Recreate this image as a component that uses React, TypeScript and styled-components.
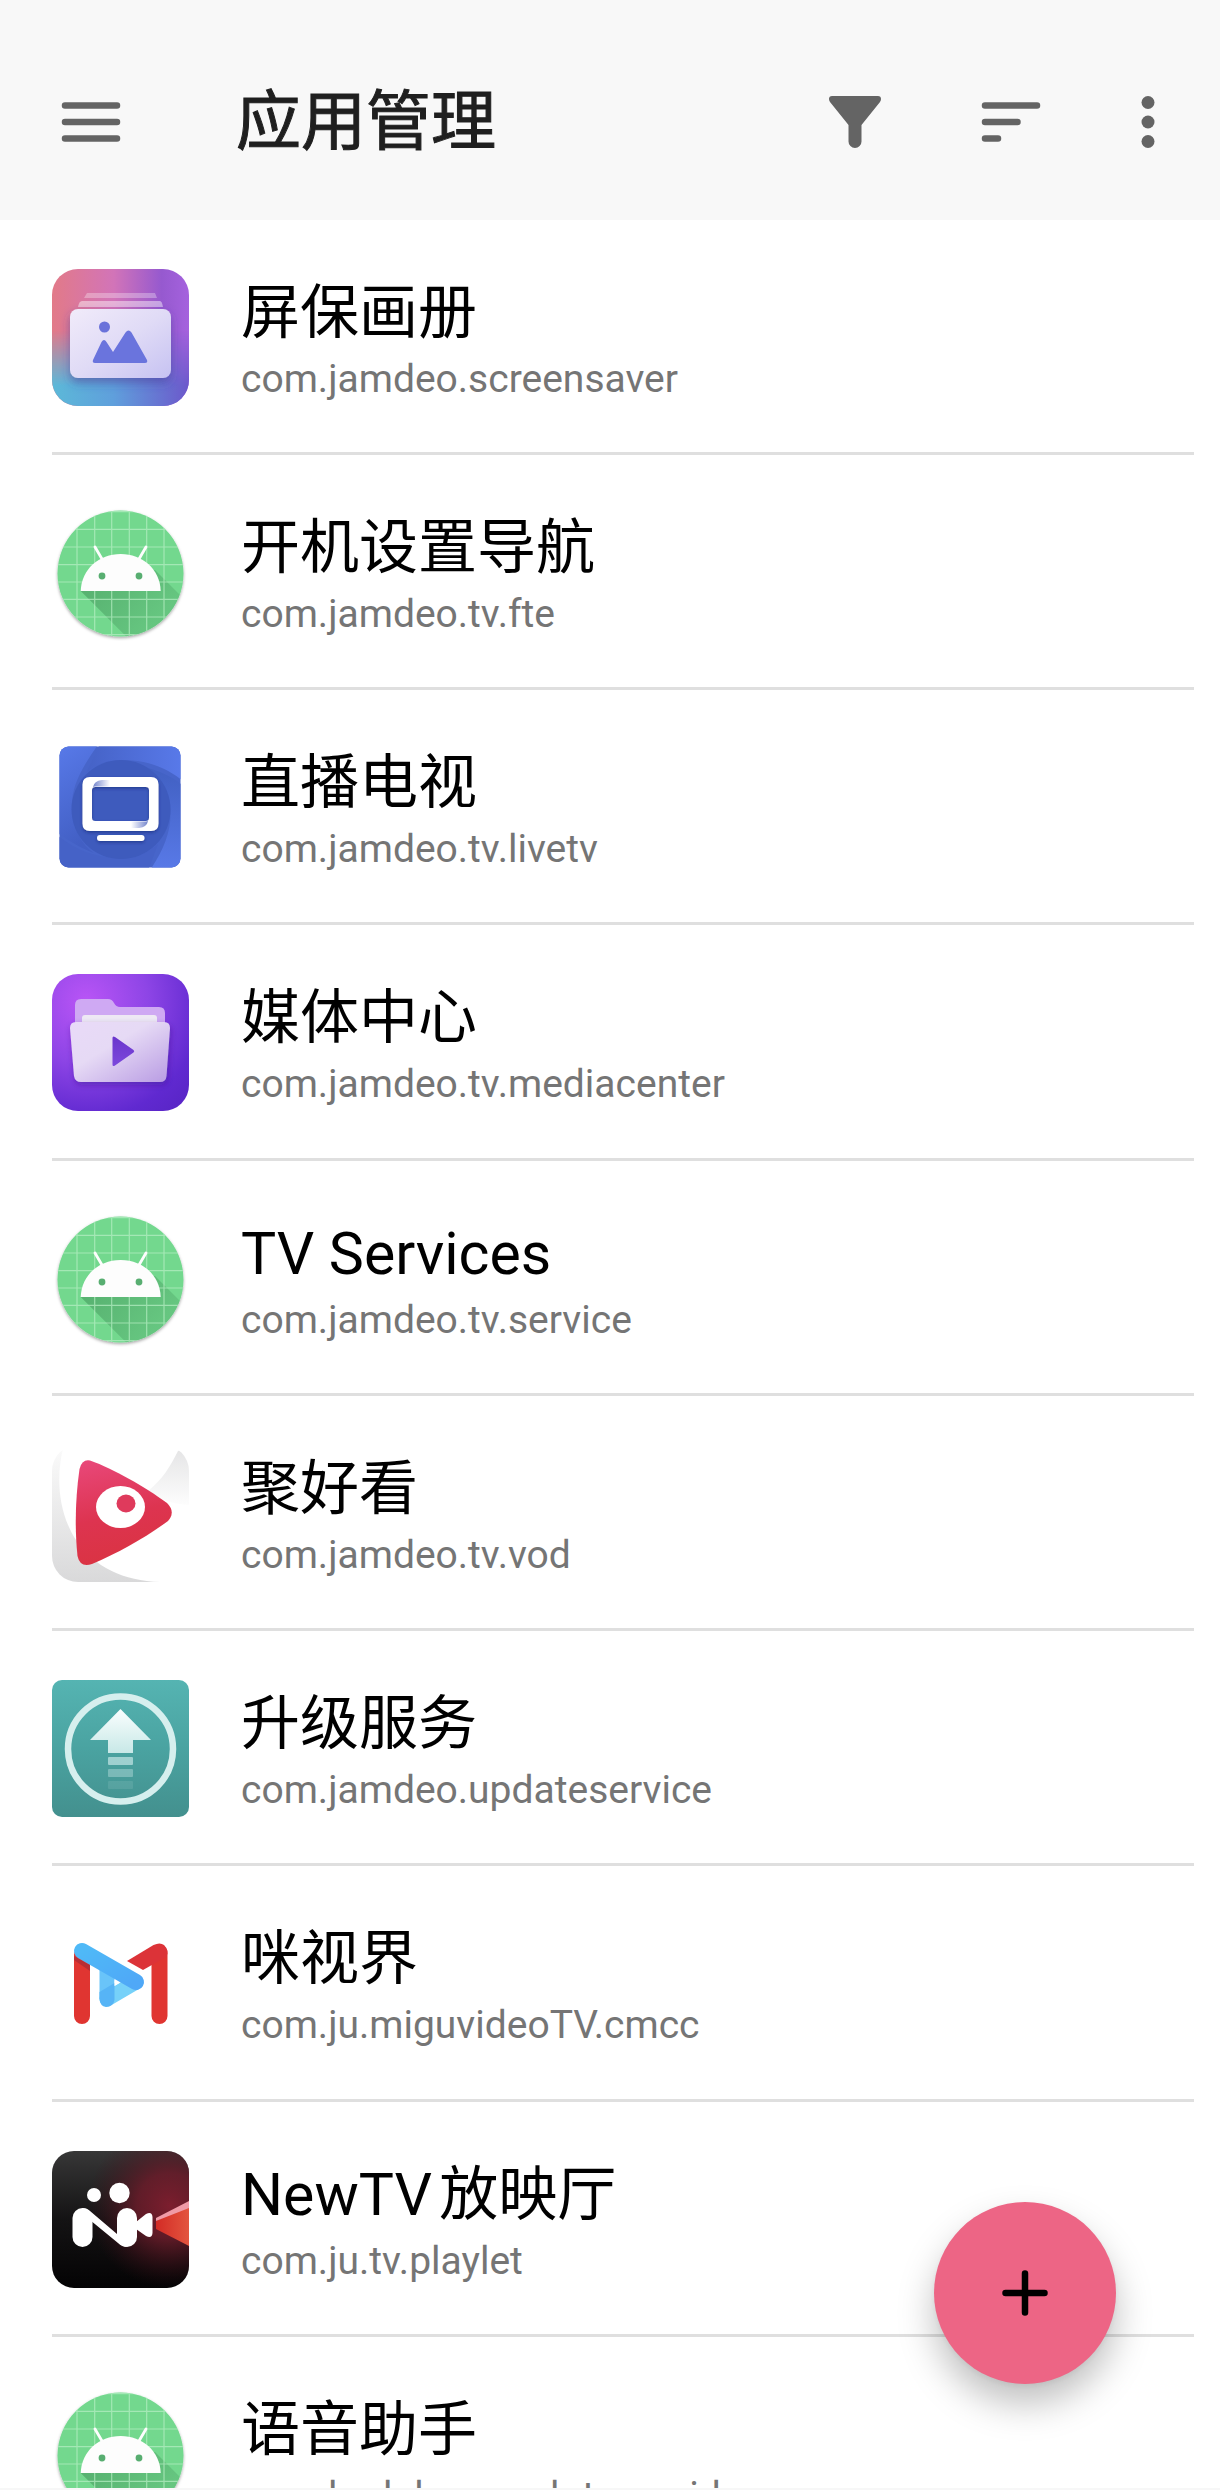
import type { ReactNode } from "react";
import styled, { createGlobalStyle } from "styled-components";

interface AppItem {
  name: string;
  packageName: string;
  icon: ReactNode;
}

const AlbumIcon = () => (
  <AppSvg>
    <defs>
      <linearGradient id="albumBase" x1="0" y1="0" x2="1" y2="0">
        <stop offset="0" stopColor="#e27a88" />
        <stop offset="0.45" stopColor="#d274b8" />
        <stop offset="0.8" stopColor="#9659cf" />
        <stop offset="1" stopColor="#a562de" />
      </linearGradient>
      <linearGradient id="albumCool" x1="0" y1="0" x2="1" y2="0">
        <stop offset="0" stopColor="#5cb9d8" />
        <stop offset="0.45" stopColor="#5f9fdc" />
        <stop offset="1" stopColor="#6c58cb" />
      </linearGradient>
      <linearGradient id="albumFade" x1="0" y1="0" x2="0" y2="1">
        <stop offset="0.45" stopColor="#fff" stopOpacity="0" />
        <stop offset="0.85" stopColor="#fff" />
      </linearGradient>
      <mask id="albumMask">
        <rect width="137" height="137" fill="url(#albumFade)" />
      </mask>
      <linearGradient id="albumCard" x1="0" y1="0" x2="1" y2="1">
        <stop offset="0" stopColor="#f1ebfa" />
        <stop offset="0.5" stopColor="#e0dbf6" />
        <stop offset="1" stopColor="#c6c2f2" />
      </linearGradient>
      <filter id="albumShadow" x="-20%" y="-20%" width="140%" height="150%">
        <feDropShadow dx="0" dy="5" stdDeviation="5" floodColor="#3c3c96" floodOpacity="0.5" />
      </filter>
    </defs>
    <rect width="137" height="137" rx="26" fill="url(#albumBase)" />
    <rect width="137" height="137" rx="26" fill="url(#albumCool)" mask="url(#albumMask)" />
    <path d="M35 24H103L105 29H32Z" fill="#fff" opacity="0.3" />
    <path d="M30 32H108Q110 32 111 38H26Q27 32 30 32Z" fill="#fff" opacity="0.45" />
    <rect x="18" y="40" width="101" height="69" rx="8" fill="url(#albumCard)" filter="url(#albumShadow)" />
    <circle cx="52.5" cy="58" r="5.5" fill="#6a72da" />
    <path
      d="M43 94Q40 94 41 91L49.500 73Q52 69 54.500 73L61 83L73.500 63.500Q76.500 59.500 79.500 63.500L95 91Q96 94 93 94Z"
      fill="#6a74dd"
    />
  </AppSvg>
);

const AndroidIcon = () => (
  <AppSvg>
    <defs>
      <clipPath id="androidClip">
        <circle cx="68.5" cy="69.5" r="63" />
      </clipPath>
      <linearGradient id="androidShade" x1="0" y1="0" x2="1" y2="0.600">
        <stop offset="0" stopColor="#2a7340" stopOpacity="0.42" />
        <stop offset="0.8" stopColor="#2a7340" stopOpacity="0.18" />
      </linearGradient>
      <filter id="androidShadow" x="-10%" y="-10%" width="120%" height="120%">
        <feDropShadow dx="0" dy="1.500" stdDeviation="1.500" floodColor="#000" floodOpacity="0.35" />
      </filter>
    </defs>
    <circle cx="68.5" cy="69.5" r="63" fill="#73d88e" filter="url(#androidShadow)" />
    <g clipPath="url(#androidClip)">
      <path d="M28.700 87L103 66L140 103V140H81.700Z" fill="url(#androidShade)" />
      <path
        d="M25 0V137M42.700 0V137M59.700 0V137M77.300 0V137M94.700 0V137M112 0V137M0 7.700H137M0 25.300H137M0 43H137M0 60.700H137M0 78H137M0 95.300H137M0 113H137M0 130.700H137"
        stroke="#b9f0c6"
        strokeWidth="1.2"
        opacity="0.7"
      />
    </g>
    <path d="M28.700 87C29.500 65 47 50 68.700 50S108 65 108.700 87Z" fill="#fdfdfd" />
    <path d="M43 43L50 55M94 43L87 55" stroke="#fdfdfd" strokeWidth="2.800" strokeLinecap="round" />
    <circle cx="50" cy="72" r="3.4" fill="#58ae71" />
    <circle cx="87" cy="72" r="3.4" fill="#58ae71" />
  </AppSvg>
);

const LiveTvIcon = () => (
  <AppSvg>
    <defs>
      <clipPath id="liveClip">
        <rect x="7.500" y="7.500" width="121" height="121" rx="9" />
      </clipPath>
      <linearGradient id="liveLeft" x1="0" y1="0" x2="0.300" y2="1">
        <stop offset="0" stopColor="#5a7cec" />
        <stop offset="1" stopColor="#425fc4" />
      </linearGradient>
      <linearGradient id="liveRight" x1="0" y1="0" x2="1" y2="0">
        <stop offset="0" stopColor="#4562c6" />
        <stop offset="1" stopColor="#5a7bec" />
      </linearGradient>
      <linearGradient id="liveCorner" x1="0" y1="0" x2="0" y2="1">
        <stop offset="0" stopColor="#4160c2" />
        <stop offset="1" stopColor="#5a7bea" />
      </linearGradient>
      <linearGradient id="liveGlossLeft" x1="0" y1="0" x2="1" y2="0">
        <stop offset="0" stopColor="#7485cc" />
        <stop offset="1" stopColor="#fff" />
      </linearGradient>
      <linearGradient id="liveGlossRight" x1="1" y1="0" x2="0" y2="0">
        <stop offset="0" stopColor="#7485cc" />
        <stop offset="1" stopColor="#fff" />
      </linearGradient>
      <filter id="liveShadow" x="-20%" y="-20%" width="140%" height="140%">
        <feDropShadow dx="0" dy="1.500" stdDeviation="1.500" floodColor="#1c2f80" floodOpacity="0.7" />
      </filter>
    </defs>
    <g clipPath="url(#liveClip)">
      <rect width="137" height="137" fill="#4765ca" />
      <path d="M0 0H50C30 28 18 48 20 72C22 92 30 106 42 114C26 108 14 100 0 90Z" fill="url(#liveLeft)" />
      <path d="M47 7H137V48C118 28 92 20 68 21C54 21 42 26 34 34Z" fill="url(#liveRight)" />
      <path d="M137 40V137H94C112 112 121 90 118 66C116 50 108 38 96 29C110 33 122 39 129 45Z" fill="url(#liveCorner)" />
      <path d="M0 92C20 110 44 120 70 119C84 119 96 114 106 105L94 137H0Z" fill="#4562c7" />
      <circle cx="69" cy="70.5" r="49.5" fill="#3e5bbd" />
    </g>
    <g filter="url(#liveShadow)">
      <path
        fillRule="evenodd"
        d="M38 38H99Q106.500 38 106.500 45.500V84.500Q106.500 92 99 92H38Q30.500 92 30.500 84.500V45.500Q30.500 38 38 38ZM43 48Q40 48 40 51V79Q40 82 43 82H94Q97 82 97 79V51Q97 48 94 48Z"
        fill="#fff"
      />
      <rect x="45" y="96" width="47.500" height="6" rx="3" fill="#fff" />
    </g>
    <path d="M41 48Q42 42 50 41H58V47.500H43Z" fill="url(#liveGlossLeft)" />
    <path d="M96 82Q95 88 87 89H79V82.500H94Z" fill="url(#liveGlossRight)" />
  </AppSvg>
);

const MediaIcon = () => (
  <AppSvg>
    <defs>
      <radialGradient id="mediaBase" cx="0.250" cy="0.200" r="1">
        <stop offset="0" stopColor="#b955f6" />
        <stop offset="0.45" stopColor="#8e45e6" />
        <stop offset="0.85" stopColor="#6029d0" />
        <stop offset="1" stopColor="#5a26c8" />
      </radialGradient>
      <linearGradient id="mediaFront" x1="0" y1="0" x2="1" y2="1">
        <stop offset="0" stopColor="#e9daf8" />
        <stop offset="0.4" stopColor="#e6daf5" />
        <stop offset="1" stopColor="#b89be3" />
      </linearGradient>
      <linearGradient id="mediaPlay" x1="0" y1="0" x2="0" y2="1">
        <stop offset="0" stopColor="#6a35cc" />
        <stop offset="1" stopColor="#7c48dc" />
      </linearGradient>
      <filter id="mediaShadow" x="-20%" y="-20%" width="140%" height="150%">
        <feDropShadow dx="1" dy="3" stdDeviation="3" floodColor="#3a1590" floodOpacity="0.45" />
      </filter>
    </defs>
    <rect width="137" height="137" rx="26" fill="url(#mediaBase)" />
    <path d="M23 52V31Q23 25 29 25H56Q60 25 62 29Q64 33 68 33H107Q113 33 113 39V52Z" fill="#cfa9f3" />
    <path d="M30 50V44Q30 41 33 41H102Q105 41 105 44V50Z" fill="#eee9f4" />
    <path
      d="M24 48H112Q118 48 118 54L114.500 102Q114 108 108 108H29Q23 108 22 102L18 54Q18 48 24 48Z"
      fill="url(#mediaFront)"
      filter="url(#mediaShadow)"
    />
    <path
      d="M60.500 64Q60.500 61.500 63 63L81.500 76Q83 77 81.500 78.500L63 91.500Q60.500 93 60.500 90.500Z"
      fill="url(#mediaPlay)"
    />
  </AppSvg>
);

const VodIcon = () => (
  <AppSvg>
    <defs>
      <clipPath id="vodClip">
        <rect width="137" height="137" rx="26" />
      </clipPath>
      <linearGradient id="vodCrescent" x1="0" y1="0" x2="0" y2="1">
        <stop offset="0" stopColor="#fbfbfb" />
        <stop offset="1" stopColor="#d9d9da" />
      </linearGradient>
      <linearGradient id="vodCorner" x1="0" y1="0" x2="0" y2="1">
        <stop offset="0" stopColor="#e3e3e4" />
        <stop offset="1" stopColor="#fdfdfd" />
      </linearGradient>
      <linearGradient id="vodRed" x1="0.200" y1="0" x2="0.400" y2="1">
        <stop offset="0" stopColor="#e84778" />
        <stop offset="0.55" stopColor="#dd3450" />
        <stop offset="1" stopColor="#da3342" />
      </linearGradient>
    </defs>
    <g clipPath="url(#vodClip)">
      <path d="M0 0H12C4 28 5 66 24 95C42 122 72 136 108 137H0Z" fill="url(#vodCrescent)" />
      <path d="M126 6C118 22 110 35 96 46C110 56 122 59 137 60V0Z" fill="url(#vodCorner)" />
    </g>
    <path
      d="M38 15.500C62 24 93 42 115 58Q124 67 116 76C93 93 66 108 40 119Q28 123 25.500 111C22.500 82 23.500 52 27.500 24Q30 14 38 15.500Z"
      fill="url(#vodRed)"
    />
    <ellipse cx="68.5" cy="62" rx="24.500" ry="21" fill="#fff" />
    <ellipse cx="74" cy="58.500" rx="9.500" ry="9" fill="#df3a5c" />
  </AppSvg>
);

const UpdateIcon = () => (
  <AppSvg>
    <defs>
      <linearGradient id="updateBase" x1="0" y1="0" x2="0" y2="1">
        <stop offset="0" stopColor="#55b4b2" />
        <stop offset="0.5" stopColor="#4aa3a1" />
        <stop offset="1" stopColor="#43908e" />
      </linearGradient>
      <linearGradient id="updateArrow" x1="0" y1="0" x2="0" y2="1">
        <stop offset="0" stopColor="#fafefe" />
        <stop offset="1" stopColor="#c8e8e7" />
      </linearGradient>
    </defs>
    <rect width="137" height="137" rx="10" fill="url(#updateBase)" />
    <circle cx="68.5" cy="69" r="52.5" fill="none" stroke="#d6efee" strokeWidth="6.500" />
    <path d="M68.500 29L99 60H81V73H56V60H38Z" fill="url(#updateArrow)" />
    <rect x="56" y="77" width="25" height="8" rx="1" fill="#d9f2f1" opacity="0.6" />
    <rect x="56" y="89" width="25" height="8" rx="1" fill="#d9f2f1" opacity="0.35" />
    <rect x="56" y="101" width="25" height="8" rx="1" fill="#d9f2f1" opacity="0.12" />
  </AppSvg>
);

const MiguIcon = () => (
  <AppSvg>
    <defs>
      <linearGradient id="miguBlue" x1="0" y1="0" x2="1" y2="1">
        <stop offset="0" stopColor="#4fb9f7" />
        <stop offset="1" stopColor="#4fa8f7" />
      </linearGradient>
    </defs>
    <path d="M30 40V101M107.500 38V101" stroke="#e03531" strokeWidth="16" strokeLinecap="round" />
    <path d="M22 41L38 50V56L22 45Z" fill="#b82d35" />
    <path d="M75 46L101.500 30Q108 27 112 30Q118 36 114 42L91 55Z" fill="#dc3338" />
    <path d="M55 50V84" stroke="#69c4f9" strokeWidth="15" />
    <path d="M55 84L84 67" stroke="#76d1f9" strokeWidth="15" strokeLinecap="round" />
    <path d="M47.500 84V77L62.500 68V85Q61 92 54 92Q48 91 47.500 84Z" fill="#56b4f6" />
    <path d="M30 36L84 67" stroke="url(#miguBlue)" strokeWidth="16" strokeLinecap="round" />
    <path d="M62.500 65L67.500 68L62.500 71Z" fill="#fff" />
  </AppSvg>
);

const PlayletIcon = () => (
  <AppSvg>
    <defs>
      <clipPath id="playletClip">
        <rect width="137" height="137" rx="22" />
      </clipPath>
      <linearGradient id="playletBase" x1="0" y1="0" x2="0" y2="1">
        <stop offset="0" stopColor="#373737" />
        <stop offset="0.5" stopColor="#141314" />
        <stop offset="1" stopColor="#040304" />
      </linearGradient>
      <radialGradient id="playletGlow" cx="0.860" cy="0.400" r="0.600">
        <stop offset="0" stopColor="#7c1e2e" />
        <stop offset="0.4" stopColor="#6b1c2a" stopOpacity="0.85" />
        <stop offset="1" stopColor="#3a1018" stopOpacity="0" />
      </radialGradient>
      <linearGradient id="playletBeam" x1="0" y1="0" x2="1" y2="0">
        <stop offset="0" stopColor="#d32b25" />
        <stop offset="1" stopColor="#e3553f" />
      </linearGradient>
    </defs>
    <g clipPath="url(#playletClip)">
      <rect width="137" height="137" fill="url(#playletBase)" />
      <rect width="137" height="137" fill="url(#playletGlow)" />
      <path d="M104 70L137 54V95L104 78Z" fill="url(#playletBeam)" />
      <path d="M104 67L137 50V57L104 70Z" fill="#f09aa6" />
    </g>
    <g fill="#fff">
      <circle cx="42" cy="44" r="7" />
      <circle cx="67.5" cy="42" r="10.2" />
      <rect x="20.500" y="57" width="20" height="39" rx="10" />
      <rect x="65" y="57" width="20" height="39" rx="10" />
      <path d="M30 57Q35 57 38 60L65 83L75 96Q70 96 66 92L38 69Z" />
      <path d="M84 71L94 63Q100 60 100.500 66V82Q100 88 94 85L84 78Z" />
    </g>
  </AppSvg>
);

const APPS: AppItem[] = [
  { name: "屏保画册", packageName: "com.jamdeo.screensaver", icon: <AlbumIcon /> },
  { name: "开机设置导航", packageName: "com.jamdeo.tv.fte", icon: <AndroidIcon /> },
  { name: "直播电视", packageName: "com.jamdeo.tv.livetv", icon: <LiveTvIcon /> },
  { name: "媒体中心", packageName: "com.jamdeo.tv.mediacenter", icon: <MediaIcon /> },
  { name: "TV Services", packageName: "com.jamdeo.tv.service", icon: <AndroidIcon /> },
  { name: "聚好看", packageName: "com.jamdeo.tv.vod", icon: <VodIcon /> },
  { name: "升级服务", packageName: "com.jamdeo.updateservice", icon: <UpdateIcon /> },
  { name: "咪视界", packageName: "com.ju.miguvideoTV.cmcc", icon: <MiguIcon /> },
  { name: "NewTV放映厅", packageName: "com.ju.tv.playlet", icon: <PlayletIcon /> },
  { name: "语音助手", packageName: "com.kodob.speech.tvprovider", icon: <AndroidIcon /> },
];

export default function App() {
  return (
    <Page>
      <GlobalStyle />
      <Header>
        <IconButton aria-label="菜单">
          <svg width="78" height="78" viewBox="0 0 78 78">
            <path d="M13 22.500H65M13 39H65M13 55.500H65" stroke="#646464" strokeWidth="6.500" strokeLinecap="round" />
          </svg>
        </IconButton>
        <Title>应用管理</Title>
        <Actions>
          <IconButton aria-label="筛选">
            <svg width="78" height="78" viewBox="0 0 78 78">
              <path
                d="M16 13H62Q65 13 65 16Q65 17.500 64 19L45.500 42V58.500A6.500 6.500 0 0 1 32.500 58.500V42L14 19Q13 17.500 13 16Q13 13 16 13Z"
                fill="#646464"
              />
            </svg>
          </IconButton>
          <IconButton aria-label="排序">
            <svg width="78" height="78" viewBox="0 0 78 78">
              <path d="M13 22.500H65M13 39H45.500M13 55.500H26" stroke="#646464" strokeWidth="6.500" strokeLinecap="round" />
            </svg>
          </IconButton>
          <IconButton aria-label="更多" $narrow>
            <svg width="40" height="78" viewBox="0 0 40 78" fill="#646464">
              <circle cx="20" cy="19.500" r="6.500" />
              <circle cx="20" cy="39" r="6.500" />
              <circle cx="20" cy="58.500" r="6.500" />
            </svg>
          </IconButton>
        </Actions>
      </Header>
      <AppList>
        {APPS.map(({ name, packageName, icon }) => (
          <AppRow key={packageName}>
            {icon}
            <TextContainer>
              <NameText>{name}</NameText>
              <PackageText>{packageName}</PackageText>
            </TextContainer>
          </AppRow>
        ))}
      </AppList>
      <NavigationStrip />
      <AddButton aria-label="添加">
        <svg width="78" height="78" viewBox="0 0 78 78">
          <path d="M39 19.500V58.500M19.500 39H58.500" stroke="#000" strokeWidth="6.500" strokeLinecap="round" />
        </svg>
      </AddButton>
    </Page>
  );
}

const GlobalStyle = createGlobalStyle`
  * {
    box-sizing: border-box;
  }

  body {
    margin: 0;
    background: #fff;
    font-family: Roboto, "Noto Sans CJK SC", sans-serif;
  }
`;

const Page = styled.main`
  display: flex;
  flex-direction: column;
  height: 100vh;
  overflow: hidden;
`;

const Header = styled.header`
  display: flex;
  flex-shrink: 0;
  align-items: center;
  height: 220px;
  padding: 24px 52px 0;
  background: #f8f8f8;
`;

const IconButton = styled.button<{ $narrow?: boolean }>`
  width: ${({ $narrow }) => ($narrow ? "40px" : "78px")};
  height: 78px;
  padding: 0;
  border: none;
  background: none;

  svg {
    display: block;
  }
`;

const Title = styled.h1`
  flex: 1;
  margin: 0 0 0 106px;
  color: #1f1f1f;
  font-size: 65px;
  font-weight: 400;
  line-height: 78px;
  -webkit-text-stroke: 1px #1f1f1f;
`;

const Actions = styled.div`
  display: flex;
  gap: 78px;
`;

const AppList = styled.ul`
  flex: 1;
  min-height: 0;
  margin: 0;
  padding: 0 26px 0 52px;
  overflow: hidden;
  list-style: none;
`;

const AppRow = styled.li`
  display: flex;
  gap: 52px;
  align-items: center;
  padding: 49px 0 46px;
  border-bottom: 3px solid #dfdfdf;

  &:nth-child(4n) {
    padding-bottom: 47px;
  }
`;

const AppSvg = styled.svg.attrs({ viewBox: "0 0 137 137" })`
  flex-shrink: 0;
  width: 137px;
  height: 137px;
`;

const TextContainer = styled.div`
  min-width: 0;
`;

const NameText = styled.h2`
  margin: 0;
  color: #000;
  font-size: 59px;
  font-weight: 400;
  line-height: 82px;
  text-autospace: normal;
`;

const PackageText = styled.p`
  margin: 0;
  color: #757575;
  font-size: 39px;
  line-height: 50px;
`;

const NavigationStrip = styled.footer`
  flex-shrink: 0;
  height: 2px;
  background: #f7f7f7;
`;

const AddButton = styled.button`
  position: fixed;
  right: 104px;
  bottom: 106px;
  display: flex;
  align-items: center;
  justify-content: center;
  width: 182px;
  height: 182px;
  padding: 0;
  border: none;
  border-radius: 50%;
  background: #ed6585;
  box-shadow: 0 20px 36px rgba(0, 0, 0, 0.25), 0 2px 6px rgba(0, 0, 0, 0.06);
`;
